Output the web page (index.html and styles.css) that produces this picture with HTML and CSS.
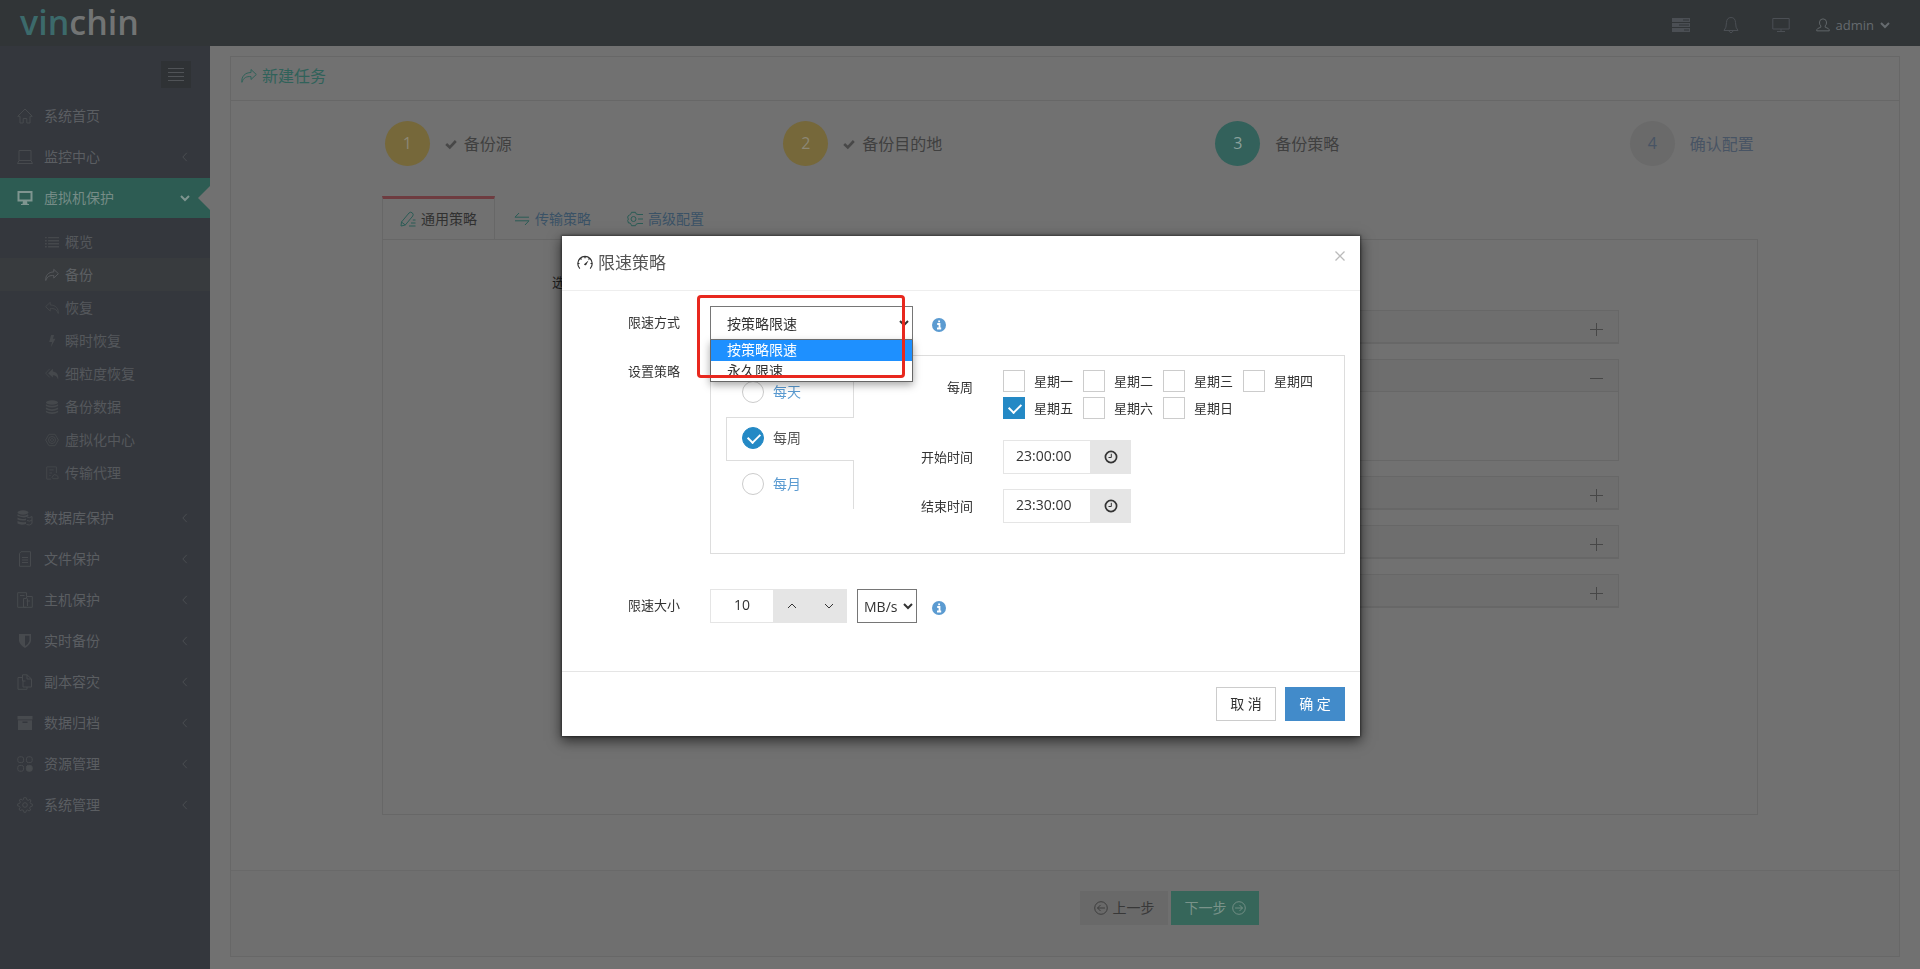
FILE: index.html
```html
<!DOCTYPE html>
<html lang="zh-CN">
<head>
<meta charset="utf-8">
<title>vinchin - 新建任务</title>
<link rel="stylesheet" href="styles.css">
</head>
<body>
<svg class="sprite" aria-hidden="true">
  <symbol id="home" viewBox="0 0 16 16"><path d="M.7 8.3 8 1l7.3 7.3H13V15H9.800V10.500H6.200V15H3V8.300Z"/></symbol>
  <symbol id="laptop" viewBox="0 0 16 16"><path d="M2 1.500H14V11.500H2ZM.5 14.500H15.500L14 11.500H2Z"/></symbol>
  <symbol id="desktop" viewBox="0 0 16 16"><path d="M1.500 2H14.500V10.500H1.500Z" stroke-width="2"/><path d="M6 11H10L10.500 14H12V15H4V14H5.500Z" fill="currentColor" stroke="none"/></symbol>
  <symbol id="list" viewBox="0 0 16 16"><path d="M0 3H2M3.500 3H16M0 6.500H2M3.500 6.500H16M0 10H2M3.500 10H16M0 13.500H2M3.500 13.500H16" stroke-width="1.600"/></symbol>
  <symbol id="share" viewBox="0 0 16 16"><path d="M10 1.500 15.300 6.500 10 11.500V8.600C5.500 8.200 2.500 9.600.9 14.300.2 8.500 4 4.600 10 4.500Z"/></symbol>
  <symbol id="reply" viewBox="0 0 16 16"><path d="M6 1.500.7 6.500 6 11.500V8.600C10.500 8.200 13.500 9.600 15.100 14.300 15.800 8.500 12 4.600 6 4.500Z"/></symbol>
  <symbol id="bolt" viewBox="0 0 16 16"><path d="M7 1H10.500L9 5.500H12L6.500 15.500 8 9H4.800Z" fill="currentColor" stroke="none"/></symbol>
  <symbol id="replyall" viewBox="0 0 16 16"><path d="M9 2V5C13 5.200 16 8.500 15 14.500 14 11 12 9.500 9 9.500V12L3.500 7Z" fill="currentColor" stroke="none"/><path d="M5.500 2 .7 7 5.500 12"/></symbol>
  <symbol id="db" viewBox="0 0 16 16"><g fill="currentColor" stroke="none"><ellipse cx="8" cy="2.800" rx="7" ry="2.500"/><path d="M1 4.800Q8 8.500 15 4.800V6.800Q8 10.500 1 6.800ZM1 8.600Q8 12.300 15 8.600V10.600Q8 14.300 1 10.600ZM1 12.200Q8 16 15 12.200V14Q8 18 1 14Z"/></g></symbol>
  <symbol id="virt" viewBox="0 0 16 16"><path d="M4.500 1.500H11.500L15.300 8 11.500 14.500H4.500L.7 8Z"/><circle cx="8" cy="8" r="4"/><path d="M6 8 8 6 10 8 8 10Z"/></symbol>
  <symbol id="agent" viewBox="0 0 16 16"><path d="M13 8V1H2V15H7M5 4.500H10M5 8H8M5 11H6.500"/><path d="M9 14.500Q7 13 9 11.500 10 8.500 13 10.500 15.500 11 15 14.500Z"/></symbol>
  <symbol id="dbs" viewBox="0 0 16 16"><g fill="currentColor" stroke="none"><ellipse cx="6" cy="2.500" rx="5.500" ry="2.200"/><path d="M.5 4.200Q6 7.500 11 4.200L11.500 6Q8 8.800.5 6ZM.5 7.600Q4 10 9 8.500V10.300Q4 11 .5 9.600ZM.5 11Q5 13 9 12V14Q4 15.500.5 13.500Z"/></g><path d="M10 7Q12.500 8.500 15 6.500V13.500Q12.500 16 9.500 14.500M10 10.500Q13 12 15 10"/></symbol>
  <symbol id="file" viewBox="0 0 16 16"><path d="M4 .7H13.500V15.300H2.500V2.500ZM5 6.500H11M5 9H11M5 11.500H11"/></symbol>
  <symbol id="host" viewBox="0 0 16 16"><path d="M9.500 15.300H.7V.7H9.500V4M3 3.500H7.500M9.500 4.500H15.300V15.300H6.500V6.500H9.500ZM9.500 9H13M10.500 6.500V14"/></symbol>
  <symbol id="shield" viewBox="0 0 16 16"><path d="M2 1H14V8Q13 12 8 15 3 12 2 8ZM8 2.700V13Q11.800 10.500 12.400 8V2.700Z" fill="currentColor" stroke="none" fill-rule="evenodd"/></symbol>
  <symbol id="copy" viewBox="0 0 16 16"><path d="M6 3.500H1V15.300H10V13M5.500.8H10L14.500 5V13H6V6.500M10 .8V5H14.500M5.500.8V7H8.500"/></symbol>
  <symbol id="archive" viewBox="0 0 16 16"><path d="M.5 1H15.500V4.500H.5ZM1 5.300H15V15H1ZM5.500 6.500V8H10.500V6.500Z" fill="currentColor" stroke="none" fill-rule="evenodd"/></symbol>
  <symbol id="blocks" viewBox="0 0 16 16"><rect x=".8" y=".8" width="5.800" height="5.800" rx="2"/><rect x="9.400" y=".8" width="5.800" height="5.800" rx="2"/><rect x=".8" y="9.400" width="5.800" height="5.800" rx="2"/><rect x="9.400" y="9.400" width="5.800" height="5.800" rx="2" fill="currentColor"/></symbol>
  <symbol id="gear" viewBox="0 0 16 16"><circle cx="8" cy="8" r="2.300"/><path d="M6.800.7H9.200L9.700 2.700 11.300 3.400 13.100 2.300 14 4 13.100 5.300 13.700 6.700 15.300 7V9.200L13.400 9.600 12.700 11.200 13.700 13 12 14 10.600 13 9.300 13.500 8.900 15.300H6.900L6.500 13.400 4.900 12.800 3.100 13.700 2 12 3.100 10.600 2.500 9.300.7 8.900V6.900L2.600 6.500 3.300 4.900 2.300 3.100 4 2 5.400 3.100 6.400 2.600Z"/></symbol>
  <symbol id="left" viewBox="0 0 10 10"><path d="M6.800.8 2.800 5 6.800 9.200"/></symbol>
  <symbol id="down" viewBox="0 0 10 10"><path d="M1 3 5 7 9 3"/></symbol>
  <symbol id="up" viewBox="0 0 10 10"><path d="M1 7 5 3 9 7"/></symbol>
  <symbol id="tick" viewBox="0 0 12 12"><path d="M1.200 6 4.800 9.400 10.800 3" stroke-width="2.600"/></symbol>
  <symbol id="servers" viewBox="0 0 18 16"><path d="M0 1H18V5H0ZM0 6H18V10H0ZM0 11H18V15H0ZM11 2.500V3.500H17V2.500ZM7 7.500V8.500H17V7.500ZM12 12.500V13.500H17V12.500Z" fill="currentColor" stroke="none" fill-rule="evenodd"/></symbol>
  <symbol id="bell" viewBox="0 0 16 18"><path d="M1 14.500Q3.500 12 3.500 6.500 3.800 1.500 8 1.500T12.500 6.500Q12.500 12 15 14.500ZM6 15Q8 18.500 10 15"/></symbol>
  <symbol id="screen" viewBox="0 0 18 16"><path d="M.8 1.500H17.200V12H.8ZM5 14.500H13M9 12V14"/></symbol>
  <symbol id="user" viewBox="0 0 16 16"><path d="M5.500 9Q3.700 7.500 4 4.500 4.500 1 8 1T12 4.500Q12.300 7.500 10.500 9V10.500L14 12Q15.200 12.800 15.200 14.700H.8Q.8 12.800 2 12L5.500 10.500Z"/></symbol>
  <symbol id="pencil" viewBox="0 0 16 16"><path d="M1 15 1.500 11 9 2Q10.500.5 12.200 1.800T12.800 5L5.300 14ZM1.500 11 5.300 14M9 15H15.500M11 12H15.500M12.800 9H15.500"/></symbol>
  <symbol id="swap" viewBox="0 0 16 16"><path d="M5 2 1 6.200H15M1 9.800H15L11 14"/></symbol>
  <symbol id="cog" viewBox="0 0 16 16"><circle cx="6.500" cy="8" r="2.500"/><path d="M11 3.500 9 2.800 8.500 1.300H4.500L4 2.800 2.500 4 1 5 .7 7 1.500 8 .7 9.500 1.500 12 3 12 4 13.300 4.500 14.700H8.500L9 13.300 11 12.500M11 3.500H16M11 8H16M11 12.500H16"/></symbol>
  <symbol id="gauge" viewBox="0 0 16 16"><path d="M2.800 13.600A7.200 7.200 0 1 1 13.200 13.600M8 1.500V3.200M3.500 3.500 4.500 4.500M12.500 3.500 11.500 4.500M1 8.500H2.500M13.500 8.500H15" stroke-width="1.200"/><path d="M11.500 5.500 9.200 10Q7.500 11 7 9.200Z" fill="currentColor" stroke="none"/></symbol>
  <symbol id="info" viewBox="0 0 14 14"><circle cx="7" cy="7" r="7" fill="currentColor" stroke="none"/><path d="M5.200 6H7.500V10.500M5 10.500H9.200M6.200 3.300H8" stroke="#fff" stroke-width="1.800"/></symbol>
  <symbol id="clock" viewBox="0 0 14 14"><circle cx="7" cy="7" r="5.600" stroke-width="1.700"/><path d="M7.300 3.800V7.500H4.500"/></symbol>
  <symbol id="cleft" viewBox="0 0 16 16"><circle cx="8" cy="8" r="7.200"/><path d="M12.500 8H4M7.500 4.500 4 8 7.500 11.500"/></symbol>
  <symbol id="cright" viewBox="0 0 16 16"><circle cx="8" cy="8" r="7.200"/><path d="M3.500 8H12M8.500 4.500 12 8 8.500 11.500"/></symbol>
  <symbol id="plus" viewBox="0 0 13 13"><path d="M0 6.500H13M6.500 0V13"/></symbol>
  <symbol id="minus" viewBox="0 0 13 13"><path d="M0 6.500H13"/></symbol>
  <symbol id="close" viewBox="0 0 10 10"><path d="M.5.5 9.500 9.500M9.500.5.5 9.500" stroke-width="1.300"/></symbol>
</svg>

<header class="topbar">
  <a class="logo" href="#"><span class="logo-accent">vin</span>chin</a>
  <nav class="tools">
    <button class="tool" aria-label="任务"><svg class="icon-tool"><use href="#servers"/></svg></button>
    <button class="tool" aria-label="通知"><svg class="icon-tool"><use href="#bell"/></svg></button>
    <button class="tool" aria-label="屏幕"><svg class="icon-tool"><use href="#screen"/></svg></button>
    <button class="account"><svg class="icon-sub"><use href="#user"/></svg><span>admin</span><svg class="icon-caret"><use href="#down"/></svg></button>
  </nav>
</header>

<div class="layout">
  <aside class="sidebar">
    <button class="collapse" aria-label="收起菜单"><span></span><span></span><span></span><span></span></button>
    <ul class="menu">
      <li><a class="menu-link" href="#"><svg class="icon"><use href="#home"/></svg><span>系统首页</span></a></li>
      <li><a class="menu-link" href="#"><svg class="icon"><use href="#laptop"/></svg><span>监控中心</span><svg class="icon-caret"><use href="#left"/></svg></a></li>
      <li>
        <a class="menu-link active" href="#"><svg class="icon"><use href="#desktop"/></svg><span>虚拟机保护</span><svg class="icon-caret"><use href="#down"/></svg></a>
        <ul class="submenu">
          <li><a class="sub-link" href="#"><svg class="icon-sub"><use href="#list"/></svg>概览</a></li>
          <li><a class="sub-link current" href="#"><svg class="icon-sub"><use href="#share"/></svg>备份</a></li>
          <li><a class="sub-link" href="#"><svg class="icon-sub"><use href="#reply"/></svg>恢复</a></li>
          <li><a class="sub-link" href="#"><svg class="icon-sub"><use href="#bolt"/></svg>瞬时恢复</a></li>
          <li><a class="sub-link" href="#"><svg class="icon-sub"><use href="#replyall"/></svg>细粒度恢复</a></li>
          <li><a class="sub-link" href="#"><svg class="icon-sub"><use href="#db"/></svg>备份数据</a></li>
          <li><a class="sub-link" href="#"><svg class="icon-sub"><use href="#virt"/></svg>虚拟化中心</a></li>
          <li><a class="sub-link" href="#"><svg class="icon-sub"><use href="#agent"/></svg>传输代理</a></li>
        </ul>
      </li>
      <li><a class="menu-link" href="#"><svg class="icon"><use href="#dbs"/></svg><span>数据库保护</span><svg class="icon-caret"><use href="#left"/></svg></a></li>
      <li><a class="menu-link" href="#"><svg class="icon"><use href="#file"/></svg><span>文件保护</span><svg class="icon-caret"><use href="#left"/></svg></a></li>
      <li><a class="menu-link" href="#"><svg class="icon"><use href="#host"/></svg><span>主机保护</span><svg class="icon-caret"><use href="#left"/></svg></a></li>
      <li><a class="menu-link" href="#"><svg class="icon"><use href="#shield"/></svg><span>实时备份</span><svg class="icon-caret"><use href="#left"/></svg></a></li>
      <li><a class="menu-link" href="#"><svg class="icon"><use href="#copy"/></svg><span>副本容灾</span><svg class="icon-caret"><use href="#left"/></svg></a></li>
      <li><a class="menu-link" href="#"><svg class="icon"><use href="#archive"/></svg><span>数据归档</span><svg class="icon-caret"><use href="#left"/></svg></a></li>
      <li><a class="menu-link" href="#"><svg class="icon"><use href="#blocks"/></svg><span>资源管理</span><svg class="icon-caret"><use href="#left"/></svg></a></li>
      <li><a class="menu-link" href="#"><svg class="icon"><use href="#gear"/></svg><span>系统管理</span><svg class="icon-caret"><use href="#left"/></svg></a></li>
    </ul>
  </aside>

  <main class="main">
    <section class="panel">
      <h1 class="panel-title"><svg class="icon"><use href="#share"/></svg>新建任务</h1>
      <ol class="steps">
        <li class="step done"><span class="num">1</span><svg class="icon-tick"><use href="#tick"/></svg><span>备份源</span></li>
        <li class="step done"><span class="num">2</span><svg class="icon-tick"><use href="#tick"/></svg><span>备份目的地</span></li>
        <li class="step now"><span class="num">3</span><span>备份策略</span></li>
        <li class="step todo"><span class="num">4</span><span>确认配置</span></li>
      </ol>
      <div class="strategy">
        <div class="tabs">
          <a class="tab selected" href="#"><svg class="icon"><use href="#pencil"/></svg>通用策略</a>
          <a class="tab" href="#"><svg class="icon"><use href="#swap"/></svg>传输策略</a>
          <a class="tab" href="#"><svg class="icon"><use href="#cog"/></svg>高级配置</a>
        </div>
        <div class="tab-body">
          <p class="pick">选择</p>
          <div class="accordion">
            <div class="acc"><button class="acc-head" aria-label="展开"><svg class="icon-acc"><use href="#plus"/></svg></button></div>
            <div class="acc open"><button class="acc-head" aria-label="收起"><svg class="icon-acc"><use href="#minus"/></svg></button><div class="acc-body"></div></div>
            <div class="acc"><button class="acc-head" aria-label="展开"><svg class="icon-acc"><use href="#plus"/></svg></button></div>
            <div class="acc"><button class="acc-head" aria-label="展开"><svg class="icon-acc"><use href="#plus"/></svg></button></div>
            <div class="acc"><button class="acc-head" aria-label="展开"><svg class="icon-acc"><use href="#plus"/></svg></button></div>
          </div>
        </div>
      </div>
      <footer class="panel-foot">
        <button class="wizard-btn prev"><svg class="icon-sub"><use href="#cleft"/></svg>上一步</button>
        <button class="wizard-btn next">下一步<svg class="icon-sub"><use href="#cright"/></svg></button>
      </footer>
    </section>
  </main>
</div>

<div class="overlay">
  <form class="modal" role="dialog" aria-labelledby="modal-title">
    <div class="modal-head">
      <h2 class="modal-title" id="modal-title"><svg class="icon"><use href="#gauge"/></svg>限速策略</h2>
      <button type="button" class="modal-close" aria-label="关闭"><svg class="icon-caret"><use href="#close"/></svg></button>
    </div>
    <div class="modal-body">
      <div class="row">
        <label class="row-label" for="mode">限速方式</label>
        <div class="row-control">
          <div class="combo">
            <select class="select mode" id="mode"><option>按策略限速</option><option>永久限速</option></select>
            <ul class="options" role="listbox">
              <li class="option chosen" role="option">按策略限速</li>
              <li class="option" role="option">永久限速</li>
            </ul>
            <div class="highlight"></div>
          </div>
          <svg class="icon-info"><use href="#info"/></svg>
        </div>
      </div>
      <div class="row">
        <span class="row-label">设置策略</span>
        <div class="schedule">
          <div class="periods">
            <label class="period"><input class="check round" type="radio" name="period">每天</label>
            <label class="period picked"><input class="check round" type="radio" name="period" checked>每周</label>
            <label class="period"><input class="check round" type="radio" name="period">每月</label>
          </div>
          <div class="fields">
            <span class="field-label">每周</span>
            <div class="days">
              <label class="day"><input class="check" type="checkbox">星期一</label>
              <label class="day"><input class="check" type="checkbox">星期二</label>
              <label class="day"><input class="check" type="checkbox">星期三</label>
              <label class="day"><input class="check" type="checkbox">星期四</label>
              <label class="day"><input class="check" type="checkbox" checked>星期五</label>
              <label class="day"><input class="check" type="checkbox">星期六</label>
              <label class="day"><input class="check" type="checkbox">星期日</label>
            </div>
            <label class="field-label" for="start">开始时间</label>
            <div class="group"><input class="input time" id="start" type="text" value="23:00:00"><button type="button" class="addon" aria-label="选择时间"><svg class="icon-info"><use href="#clock"/></svg></button></div>
            <label class="field-label" for="end">结束时间</label>
            <div class="group"><input class="input time" id="end" type="text" value="23:30:00"><button type="button" class="addon" aria-label="选择时间"><svg class="icon-info"><use href="#clock"/></svg></button></div>
          </div>
        </div>
      </div>
      <div class="row limit">
        <label class="row-label" for="size">限速大小</label>
        <div class="row-control">
          <div class="group spin"><input class="input amount" id="size" type="text" value="10"><button type="button" class="addon" aria-label="增加"><svg class="icon-spin"><use href="#up"/></svg></button><button type="button" class="addon" aria-label="减少"><svg class="icon-spin"><use href="#down"/></svg></button></div>
          <select class="select unit" aria-label="单位"><option>MB/s</option></select>
          <svg class="icon-info"><use href="#info"/></svg>
        </div>
      </div>
    </div>
    <div class="modal-foot">
      <button type="button" class="btn">取 消</button>
      <button type="button" class="btn primary">确 定</button>
    </div>
  </form>
</div>
</body>
</html>
```

FILE: styles.css
```css
* { box-sizing: border-box; }
body {
  margin: 0;
  min-height: 100vh;
  display: flex;
  flex-direction: column;
  background: #717171;
  color: #333;
  font: 14px/20px "Open Sans", "Noto Sans CJK SC", sans-serif;
}
ul, ol { list-style: none; margin: 0; padding: 0; }
a { color: inherit; text-decoration: none; }
button, input, select { font: inherit; color: inherit; border-radius: 0; margin: 0; }
button { border: 0; background: none; padding: 0; }
svg { flex: none; fill: none; stroke: currentColor; stroke-width: 1; }
.sprite { position: absolute; width: 0; height: 0; }
.icon { width: 16px; height: 16px; }
.icon-sub, .icon-info { width: 14px; height: 14px; }
.icon-tool { width: 18px; height: 18px; }
.icon-caret, .icon-spin { width: 10px; height: 10px; }
.icon-tick { width: 12px; height: 12px; }
.icon-acc { width: 13px; height: 13px; }

.topbar {
  height: 46px;
  display: flex;
  justify-content: space-between;
  align-items: center;
  padding: 0 30px 0 20px;
  background: #313537;
}
.logo { font-size: 34px; font-weight: 600; line-height: 44px; padding-bottom: 2px; color: #727474; }
.logo-accent { color: #3c6a6b; }
.tools { display: flex; align-items: center; color: #4b4f54; padding-top: 4px; }
.tool { display: flex; padding: 0 16px; }
.account { display: flex; align-items: center; gap: 6px; margin-left: 10px; font-size: 13px; color: #666b6f; }
.account .icon-caret { stroke-width: 2; }

.layout { flex: 1; display: flex; }
.sidebar { width: 210px; flex: none; background: #34373d; color: #5b5e62; padding-top: 15px; }
.collapse {
  display: flex;
  flex-direction: column;
  align-items: center;
  justify-content: center;
  gap: 3px;
  width: 30px;
  height: 27px;
  margin: 0 19px 8px auto;
  background: #2f3235;
}
.collapse span { width: 16px; height: 1px; background: #505357; }
.menu-link { display: flex; align-items: center; gap: 11px; height: 40px; margin-bottom: 1px; padding: 0 20px 0 17px; }
.menu-link .icon { color: #474a4e; }
.menu-link .icon-caret { color: #4b4e52; margin-left: auto; }
.menu-link.active { position: relative; background: #2d5c53; color: #768c87; }
.menu-link.active svg { color: #7f9590; }
.menu-link.active .icon-caret { stroke-width: 2; }
.menu-link.active::after {
  content: "";
  position: absolute;
  right: 0;
  top: 8px;
  border: 12px solid transparent;
  border-left-width: 0;
  border-right-color: #717171;
}
.submenu { padding: 6px 0 9px; }
.sub-link { display: flex; align-items: center; gap: 6px; height: 33px; padding-left: 45px; color: #55585c; }
.sub-link svg { color: #45484c; }
.sub-link.current { background: #383b3e; color: #5d6063; }
.sub-link.current svg { color: #5a5d60; }

.main { flex: 1; display: flex; min-width: 0; padding: 10px 20px 12px; }
.panel { flex: 1; display: flex; flex-direction: column; min-width: 0; border: 1px solid #676767; }
.panel-title {
  display: flex;
  align-items: center;
  gap: 5px;
  height: 44px;
  margin: 0;
  padding: 0 10px 6px;
  border-bottom: 1px solid #676767;
  color: #30625a;
  font-size: 16px;
  font-weight: 400;
}
.steps { display: grid; grid-template-columns: repeat(4, 1fr); padding: 20px 0 30px 10px; }
.step { display: flex; justify-content: center; align-items: center; gap: 15px; font-size: 16px; color: #404040; }
.step svg { color: #484848; margin-right: -8px; }
.num {
  width: 45px;
  height: 45px;
  border-radius: 50%;
  background: #6a6a6a;
  text-align: center;
  font-size: 16px;
  line-height: 45px;
}
.done .num { background: #76683a; color: #8c8775; }
.now .num { background: #33615b; color: #8aa09c; }
.todo { color: #485464; }
.strategy { flex: 1; display: flex; flex-direction: column; padding: 0 141px 55px 151px; }
.tabs { display: flex; gap: 2px; }
.tab { display: flex; align-items: center; gap: 5px; height: 44px; margin-bottom: -1px; padding: 1px 17px 0; color: #3a5266; }
.tab svg { color: #2b5c56; }
.tab.selected { border: 1px solid #676767; border-top: 3px solid #6e3c40; border-bottom: 0; padding: 0 17px 2px; background: #717171; color: #303030; }
.tab-body { flex: 1; border: 1px solid #676767; padding: 32px 138px 0 169px; }
.pick { margin: 0 0 18px; font-size: 13px; color: #202020; }
.accordion { display: flex; flex-direction: column; gap: 15px; margin-left: 158px; }
.acc { border: 1px solid #676767; border-bottom-width: 2px; }
.acc-head { display: flex; justify-content: flex-end; align-items: center; width: 100%; height: 31px; padding: 6px 15px 0 0; background: #6e6e6e; color: #474747; }
.acc.open { border-bottom-width: 1px; }
.acc-body { height: 69px; border-top: 1px solid #676767; }
.panel-foot { display: flex; justify-content: center; gap: 3px; padding: 20px 0 31px 209px; border-top: 1px solid #696969; background: #6f6f6f; }
.wizard-btn { display: flex; align-items: center; justify-content: center; gap: 5px; width: 88px; height: 34px; }
.prev { background: #696969; color: #383838; }
.next { background: #36665a; color: #7a938a; }

.overlay { position: fixed; inset: 0; display: flex; justify-content: center; align-items: flex-start; padding: 236px 0 0 2px; }
.modal { width: 798px; background: #fff; box-shadow: 0 4px 12px 1px rgba(0, 0, 0, .6), 0 0 2px 1px rgba(0, 0, 0, .4); }
.modal-head { display: flex; justify-content: space-between; height: 55px; padding: 15px 15px 0; border-bottom: 1px solid #eee; }
.modal-title { display: flex; align-items: center; gap: 5px; height: 24px; margin: 0; font-size: 17px; font-weight: 400; color: #555; }
.modal-title svg { color: #333; }
.modal-close { display: flex; height: 10px; color: #bbb; }
.modal-body { display: flex; flex-direction: column; gap: 15px; padding: 15px 15px 48px 0; }
.row { display: flex; gap: 30px; }
.row.limit { margin-top: 20px; }
.row-label { width: 118px; flex: none; text-align: right; font-size: 13px; line-height: 32px; }
.row-control { flex: 1; display: flex; align-items: center; }
.row-control .icon-info { color: #5b9bd1; margin-top: 4px; }
.combo { position: relative; width: 203px; margin-right: 19px; }
.select { height: 34px; border: 1px solid #767676; background: #fff; }
.mode { display: block; width: 100%; padding: 0 0 0 12px; }
.options {
  position: absolute;
  z-index: 2;
  top: 34px;
  left: 0;
  right: 0;
  border: 1px solid #666;
  border-top: 0;
  background: #fff;
  box-shadow: 0 3px 8px rgba(0, 0, 0, .35);
}
.option { height: 20px; padding-left: 16px; line-height: 20px; }
.option.chosen { height: 21px; background: #1e90ff; color: #fff; }
.highlight { position: absolute; z-index: 3; top: -11px; left: -13px; width: 208px; height: 83px; border: 3px solid #e8281e; border-radius: 4px; }
.schedule { flex: 1; display: flex; min-height: 199px; padding: 14px 15px; border: 1px solid #ddd; }
.periods { display: flex; flex-direction: column; gap: 2px; width: 128px; height: 139px; padding-top: 1px; border-right: 1px solid #ddd; flex: none; }
.period { display: flex; align-items: center; gap: 9px; height: 44px; padding: 0 0 2px 16px; color: #5b9bd1; }
.period.picked { margin-right: -1px; padding-left: 15px; border: 1px solid #ddd; border-right: 0; background: #fff; color: #555; }
.check { appearance: none; position: relative; width: 22px; height: 22px; flex: none; border: 1px solid #ccc; background: #fff; }
.round { border-radius: 50%; }
.check:checked { background: #2489c5; border-color: #2489c5; }
.check:checked::after {
  content: "";
  position: absolute;
  left: 5px;
  top: 5px;
  width: 10px;
  height: 6px;
  border: solid #fff;
  border-width: 0 0 2px 2px;
  transform: rotate(-45deg);
}
.fields { display: grid; grid-template-columns: 119px auto; column-gap: 30px; row-gap: 15px; align-content: start; font-size: 13px; }
.field-label { text-align: right; line-height: 34px; }
.days { display: grid; grid-template-columns: repeat(4, 80px); gap: 5px 0; margin-bottom: 6px; }
.day { display: flex; align-items: center; gap: 9px; height: 22px; }
.group { display: flex; height: 34px; font-size: 14px; }
.input { border: 1px solid #e5e5e5; background: #fff; padding: 0 12px 2px; }
.time { width: 88px; }
.addon { display: flex; align-items: center; justify-content: center; width: 40px; background: #e5e5e5; }
.amount { width: 64px; text-align: center; }
.spin { width: 137px; margin-right: 10px; }
.spin .addon { width: 37px; }
.unit { width: 60px; padding: 0 0 0 2px; margin-right: 15px; }
.modal-foot { display: flex; justify-content: flex-end; gap: 9px; padding: 15px; border-top: 1px solid #e5e5e5; }
.btn { width: 60px; height: 34px; border: 1px solid #ccc; background: #fff; }
.primary { border-color: #428bca; background: #428bca; color: #fff; }
```
